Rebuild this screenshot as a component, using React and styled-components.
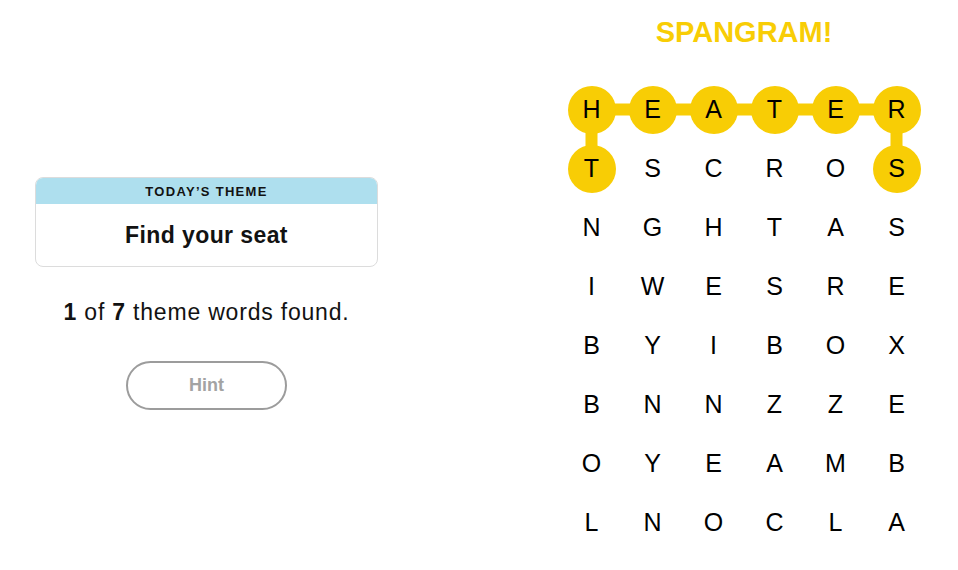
import React from "react";
import styled, { createGlobalStyle } from "styled-components";

const CELL_W = 61;
const CELL_H = 59;
const YELLOW = "#f8cd05";

const letters = [
  "HEATER",
  "TSCROS",
  "NGHTAS",
  "IWESRE",
  "BYIBOX",
  "BNNZZE",
  "OYEAMB",
  "LNOCLA",
];

// THEATERS, in the order it was traced
const spangram = [
  [1, 0],
  [0, 0],
  [0, 1],
  [0, 2],
  [0, 3],
  [0, 4],
  [0, 5],
  [1, 5],
];

const isFound = (r, c) => spangram.some(([pr, pc]) => pr === r && pc === c);
const center = ([r, c]) => [c * CELL_W + CELL_W / 2, r * CELL_H + CELL_H / 2];

const GlobalStyle = createGlobalStyle`
  body {
    margin: 0;
    background: #fff;
    font-family: "Liberation Sans", Arial, sans-serif;
    color: #121212;
  }
`;

const Page = styled.div`
  display: flex;
  width: 958px;
  height: 570px;
`;

const Sidebar = styled.div`
  display: flex;
  flex-direction: column;
  align-items: center;
  width: 343px;
  padding-left: 35px;
  padding-top: 177px;
`;

const ThemeCard = styled.div`
  width: 100%;
  box-sizing: border-box;
  border: 1px solid #dcdcdc;
  border-radius: 8px;
  overflow: hidden;
`;

const ThemeHeader = styled.div`
  background: #aedfee;
  height: 26px;
  display: flex;
  align-items: center;
  justify-content: center;
  font-size: 13px;
  font-weight: 700;
  letter-spacing: 1.3px;
  text-transform: uppercase;
`;

const ThemeTitle = styled.div`
  height: 62px;
  display: flex;
  align-items: center;
  justify-content: center;
  font-size: 23px;
  font-weight: 700;
  letter-spacing: 0.4px;
`;

const Progress = styled.p`
  margin: 32px 0 0;
  font-size: 23px;
  line-height: 26px;
  letter-spacing: 0.8px;

  b {
    font-weight: 700;
  }
`;

const HintButton = styled.button`
  margin-top: 36px;
  width: 161px;
  height: 49px;
  border: 2px solid #9c9c9c;
  border-radius: 25px;
  background: #fff;
  color: #a3a3a3;
  font-family: inherit;
  font-size: 18px;
  font-weight: 700;
  cursor: default;
`;

const Board = styled.div`
  display: flex;
  flex-direction: column;
  align-items: center;
  margin-left: 183px;
  padding-top: 14px;
`;

const Banner = styled.div`
  height: 36px;
  display: flex;
  align-items: center;
  color: ${YELLOW};
  font-size: 29px;
  font-weight: 700;
`;

const Grid = styled.div`
  position: relative;
  margin-top: 30px;
  display: grid;
  grid-template-columns: repeat(6, ${CELL_W}px);
  grid-auto-rows: ${CELL_H}px;
`;

const Links = styled.svg`
  position: absolute;
  inset: 0;
  pointer-events: none;
`;

const Cell = styled.div`
  position: relative;
  display: flex;
  align-items: center;
  justify-content: center;
`;

const Letter = styled.span`
  width: 48px;
  height: 48px;
  border-radius: 50%;
  display: flex;
  align-items: center;
  justify-content: center;
  font-size: 25px;
  color: #000;
  background: ${(p) => (p.$found ? YELLOW : "transparent")};
`;

export default function App() {
  const points = spangram.map(center);

  return (
    <>
      <GlobalStyle />
      <Page>
        <Sidebar>
          <ThemeCard>
            <ThemeHeader>Today’s theme</ThemeHeader>
            <ThemeTitle>Find your seat</ThemeTitle>
          </ThemeCard>
          <Progress>
            <b>1</b> of <b>7</b> theme words found.
          </Progress>
          <HintButton>Hint</HintButton>
        </Sidebar>
        <Board>
          <Banner>SPANGRAM!</Banner>
          <Grid>
            <Links width={CELL_W * 6} height={CELL_H * 8}>
              <polyline
                points={points.map((p) => p.join(",")).join(" ")}
                fill="none"
                stroke={YELLOW}
                strokeWidth="12"
              />
            </Links>
            {letters.map((row, r) =>
              row.split("").map((ch, c) => (
                <Cell key={`${r}-${c}`}>
                  <Letter $found={isFound(r, c)}>{ch}</Letter>
                </Cell>
              ))
            )}
          </Grid>
        </Board>
      </Page>
    </>
  );
}
